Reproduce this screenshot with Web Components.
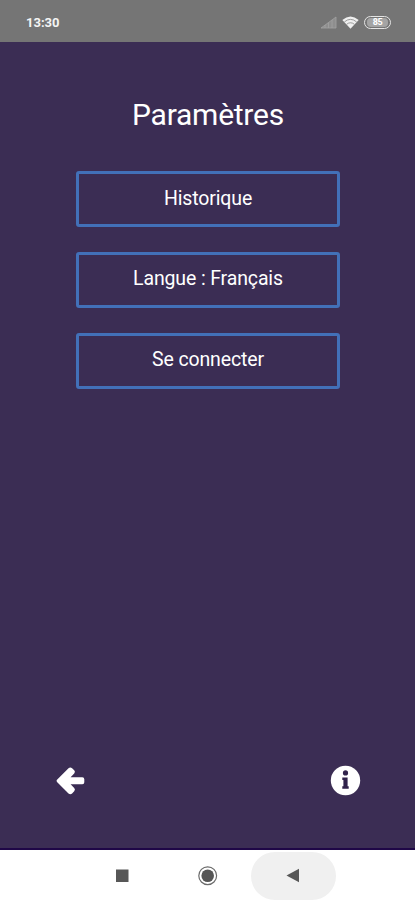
<!DOCTYPE html>
<html lang="fr">
<head>
<meta charset="utf-8">
<title>Paramètres</title>
<style>
html, body { margin: 0; height: 100%; }
body { font-family: Roboto, "Noto Sans", sans-serif; background: #3b2d54; overflow: hidden; }
</style>
</head>
<body>
<settings-app></settings-app>

<script>
class StatusBar extends HTMLElement {
    constructor() {
        super();
        this.attachShadow({ mode: 'open' }).innerHTML = `
            <style>
:host {
    display: flex;
    align-items: center;
    box-sizing: border-box;
    height: 42px;
    padding: 3px 24px 0 26px;
    background: #757575;
    color: #f4f4f4;
}

.time {
    flex: 1;
    font-size: 13px;
    font-weight: 700;
    line-height: 16px;
}

svg { display: block; }
.wifi { margin: 0 5px 0 5px; }

.battery {
    display: flex;
    align-items: center;
    justify-content: center;
    box-sizing: border-box;
    width: 27px;
    height: 13px;
    border: 1.5px solid #e4e4e4;
    border-radius: 7px;
}

.level {
    width: 21px;
    height: 9px;
    border-radius: 4px;
    background: #a4a4a4;
    color: #fff;
    font-size: 9px;
    font-weight: 700;
    letter-spacing: -.3px;
    line-height: 9px;
    text-align: center;
}
            </style>
            <span class="time"><slot></slot></span>
            <svg width="17" height="13" viewBox="0 0 17 13">
                <path d="M1 12 L16 1 V12 Z" fill="#8e8e8e"/>
                <path d="M1 12 L16 1 V12 Z M5 9v3 M8.5 7v5 M12 4v8" fill="none" stroke="#a2a2a2" stroke-width=".8"/>
            </svg>
            <svg class="wifi" width="17" height="13" viewBox="0 0 17 13">
                <path d="M.3 4 Q8.500 -3 16.700 4 L8.500 12.800 Z" fill="#f0f0f0"/>
                <path d="M2.400 5.900 Q8.500 .8 14.600 5.900 M4.600 8.300 Q8.500 5.200 12.400 8.300" fill="none" stroke="#858585" stroke-width=".8"/>
            </svg>
            <div class="battery"><div class="level">85</div></div>
        `;
    }
}

class MenuButton extends HTMLElement {
    constructor() {
        super();
        this.attachShadow({ mode: 'open' }).innerHTML = `
            <style>
:host { display: block; }

button {
    display: block;
    box-sizing: border-box;
    width: 100%;
    height: 56px;
    padding: 0 0 2px;
    border: 3px solid #4270b8;
    border-radius: 3px;
    background: transparent;
    color: #fff;
    font: inherit;
    font-size: 19.5px;
    letter-spacing: -.13px;
    cursor: pointer;
}
            </style>
            <button><slot></slot></button>
        `;
    }
}

class AndroidNav extends HTMLElement {
    constructor() {
        super();
        this.attachShadow({ mode: 'open' }).innerHTML = `
            <style>
:host {
    display: flex;
    justify-content: center;
    box-sizing: border-box;
    height: 50px;
    padding: 2px 0 0 1px;
    background: #fff;
}

.key {
    display: flex;
    align-items: center;
    justify-content: center;
    width: 85px;
    height: 48px;
    padding: 0 1px 1px 0;
    box-sizing: border-box;
    border-radius: 24px;
}

.pressed { background: #f0f0f0; }
            </style>
            <div class="key">
                <svg width="20" height="20"><rect x="3" y="3.500" width="12.500" height="12.500" fill="#575757"/></svg>
            </div>
            <div class="key">
                <svg width="20" height="20">
                    <circle cx="9.700" cy="9.700" r="8.900" fill="none" stroke="#6b6b6b" stroke-width="1.200"/>
                    <circle cx="9.700" cy="9.700" r="6.300" fill="#555"/>
                </svg>
            </div>
            <div class="key pressed">
                <svg width="20" height="20"><path d="M3.500 9.500 L16 2.700 V16.300 Z" fill="#575757"/></svg>
            </div>
        `;
    }
}

class SettingsApp extends HTMLElement {
    constructor() {
        super();
        this.attachShadow({ mode: 'open' }).innerHTML = `
            <style>
:host {
    display: flex;
    flex-direction: column;
    height: 100vh;
    background: #3b2d54;
    color: #fff;
}

main {
    flex: 1;
    display: flex;
    flex-direction: column;
    align-items: center;
    border-bottom: 2px solid #1f0747;
}

h1 {
    margin: 53px 0 36px;
    font-size: 30px;
    font-weight: 400;
    letter-spacing: -.25px;
    line-height: 40px;
    text-indent: 1px;
}

.menu {
    display: flex;
    flex-direction: column;
    gap: 24.800px;
    width: 264px;
    padding-left: 1px;
}

.actions {
    display: flex;
    align-items: center;
    justify-content: space-between;
    box-sizing: border-box;
    width: 100%;
    margin-top: auto;
    padding: 0 54px 52px 56px;
}

.actions svg { display: block; }
            </style>
            <status-bar>13:30</status-bar>
            <main>
                <h1>Paramètres</h1>
                <div class="menu">
                    <menu-button>Historique</menu-button>
                    <menu-button>Langue : Français</menu-button>
                    <menu-button>Se connecter</menu-button>
                </div>
                <div class="actions">
                    <svg width="30" height="30" viewBox="0 0 30 30" fill="#fff">
                        <path d="M1 13.800 L12.500 2.200 Q14.300 .6 16.100 2.200 L18.200 4.300 Q19.700 5.900 18.200 7.500 L14.600 11.200 H26.300 Q28.300 11.200 28.300 13.200 V16.300 Q28.300 18.300 26.300 18.300 H14.600 L18.200 22.100 Q19.700 23.700 18.200 25.300 L16.100 27.400 Q14.300 29 12.500 27.400 L1 15.900 Q0 14.850 1 13.800 Z"/>
                    </svg>
                    <svg width="31" height="31" viewBox="0 0 31 31">
                        <circle cx="15.500" cy="15.500" r="14.700" fill="#fff"/>
                        <circle cx="15.500" cy="7.900" r="2.600" fill="#30224b"/>
                        <path d="M12.300 12.500h5.300v8.700h1.100v2.500h-6.400v-2.500h1.100v-6.200h-1.100z" fill="#30224b"/>
                    </svg>
                </div>
            </main>
            <android-nav></android-nav>
        `;
    }
}

customElements.define('status-bar', StatusBar);
customElements.define('menu-button', MenuButton);
customElements.define('android-nav', AndroidNav);
customElements.define('settings-app', SettingsApp);
</script>
</body>
</html>
